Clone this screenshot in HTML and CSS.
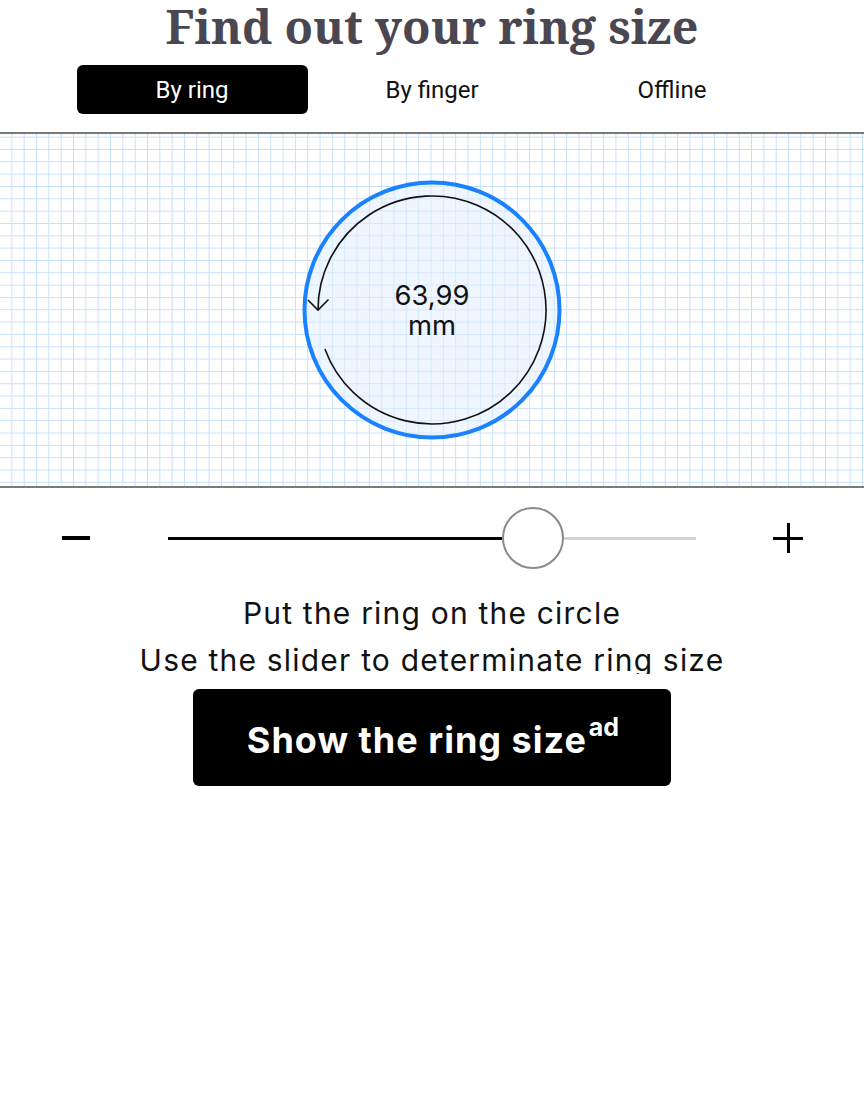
FILE: index.html
```html
<!DOCTYPE html>
<html lang="en">
<head>
<meta charset="utf-8">
<title>Find out your ring size</title>
<link rel="stylesheet" href="styles.css">
</head>
<body>
<h1 class="title">Find out your ring size</h1>
<nav class="tabs">
  <div class="tab active">By ring</div>
  <div class="tab">By finger</div>
  <div class="tab">Offline</div>
</nav>
<section class="board">
  <div class="ring">
    <svg class="ring-svg" width="270" height="270" viewBox="0 0 270 270">
      <circle cx="135" cy="135" r="127.5" fill="rgba(225,238,255,0.55)" stroke="#1a82ff" stroke-width="4"/>
      <path d="M 27.9 174 A 114 114 0 1 0 21 135" fill="none" stroke="#111" stroke-width="1.6"/>
      <path d="M 11 125 L 21 135 L 31.5 124.5" fill="none" stroke="#111" stroke-width="1.6"/>
    </svg>
    <div class="ring-label"><span>63,99</span><span>mm</span></div>
  </div>
</section>
<div class="slider">
  <div class="minus"></div>
  <div class="track">
    <div class="track-fill"></div>
    <div class="thumb"></div>
    <div class="track-rest"></div>
  </div>
  <div class="plus"></div>
</div>
<div class="instructions">
  <p>Put the ring on the circle</p>
  <p>Use the slider to determinate ring size</p>
</div>
<div class="cta-wrap">
  <button class="cta">Show the ring size<sup>ad</sup></button>
</div>
</body>
</html>
```
FILE: styles.css
```css
* { box-sizing: border-box; }
body {
  margin: 0;
  background: #fff;
  font-family: Inter, "Open Sans", sans-serif;
  color: #111;
}
.title {
  margin: 0;
  text-align: center;
  font-family: "Noto Serif", "DejaVu Serif", serif;
  font-weight: bold;
  font-size: 46.6px;
  line-height: 52px;
  color: #4a4652;
  height: 56px;
}
.tabs {
  display: flex;
  justify-content: center;
  gap: 9px;
  margin-top: 9px;
}
.tab {
  width: 231px;
  height: 49px;
  border-radius: 6px;
  display: flex;
  align-items: center;
  justify-content: center;
  font-family: Roboto, sans-serif;
  font-size: 24px;
  color: #111;
}
.tab.active {
  background: #000;
  color: #fff;
}
.board {
  margin-top: 18px;
  height: 356px;
  border-top: 2px solid #7a7a7a;
  border-bottom: 2px solid #7a7a7a;
  background-color: #fff;
  background-image:
    linear-gradient(to right, transparent 11.34px, #c6e0fb 11.34px),
    linear-gradient(to bottom, #c6e0fb 1px, transparent 1px);
  background-size: 12.343px 12.343px;
  background-position: 0 2.7px;
  display: flex;
  align-items: center;
  justify-content: center;
}
.ring {
  width: 270px;
  height: 270px;
  display: grid;
  place-items: center;
}
.ring-svg, .ring-label {
  grid-area: 1 / 1;
}
.ring-label {
  display: flex;
  flex-direction: column;
  align-items: center;
  font-size: 27.4px;
  line-height: 30px;
  margin-top: -1px;
}
.slider {
  display: flex;
  align-items: center;
  height: 62px;
  margin-top: 19px;
}
.minus {
  margin-left: 62px;
  width: 28px;
  height: 4px;
  background: #000;
}
.track {
  margin-left: 78px;
  width: 528px;
  display: flex;
  align-items: center;
}
.track-fill {
  width: 334px;
  height: 3px;
  background: #000;
}
.thumb {
  width: 62px;
  height: 62px;
  border-radius: 50%;
  border: 2px solid #8a8a8a;
  background: #fff;
}
.track-rest {
  flex: 1;
  height: 3px;
  background: #d3d3d3;
}
.plus {
  margin-left: 77px;
  width: 30px;
  height: 30px;
  background:
    linear-gradient(#000, #000) center / 30px 3px no-repeat,
    linear-gradient(#000, #000) center / 3px 30px no-repeat;
}
.instructions {
  margin-top: 21px;
  height: 84px;
  overflow: hidden;
  text-align: center;
  font-size: 30px;
  line-height: 47px;
  letter-spacing: 1.2px;
}
.instructions p {
  margin: 0;
}
.cta-wrap {
  display: flex;
  justify-content: center;
  margin-top: 15px;
}
.cta {
  width: 478px;
  height: 97px;
  border: 0;
  border-radius: 6px;
  background: #000;
  color: #fff;
  font-family: Inter, sans-serif;
  font-weight: bold;
  font-size: 36px;
  line-height: 40px;
  letter-spacing: 1px;
  padding: 4px 0 0 2px;
}
.cta sup {
  font-size: 25px;
  line-height: 0;
  letter-spacing: 0;
  vertical-align: 17px;
  margin-left: 2px;
}
```
